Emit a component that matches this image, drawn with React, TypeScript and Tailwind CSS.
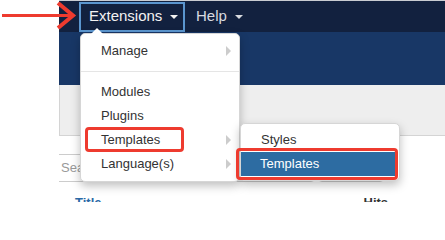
import React from "react";

const font = { fontFamily: '"Liberation Sans", Arial, sans-serif' };

function Chevron() {
  return (
    <span className="absolute right-[8px] top-1/2 -translate-y-1/2 w-0 h-0 border-y-[5px] border-y-transparent border-l-[5px] border-l-[#cccccc]" />
  );
}

function MenuItem({ label, sub }: { label: string; sub?: boolean }) {
  return (
    <div className="relative h-[24px] pl-[20px] leading-[24px] text-[13px] text-[#333333]">
      {label}
      {sub && <Chevron />}
    </div>
  );
}

export default function App() {
  return (
    <div
      className="relative w-[445px] h-[202px] overflow-hidden bg-white flex"
      style={font}
    >
      <div className="w-[59px] shrink-0" />

      {/* page behind the menus */}
      <div className="flex-1 flex flex-col">
        <div className="shrink-0 h-[32px] bg-[#12213f] border-t border-[#c9ccd2] flex items-center">
          <div className="ml-[20px] h-[30px] w-[106px] border-2 border-[#5b96cf] flex items-center pl-[8px] text-[15px] text-[#f2f2f2]">
            Extensions
            <span className="ml-[8px] w-0 h-0 border-x-[4px] border-x-transparent border-t-[4px] border-t-[#f2f2f2]" />
          </div>
          <div className="ml-[11px] flex items-center text-[15px] text-[#d8dbe0]">
            Help
            <span className="ml-[8px] w-0 h-0 border-x-[4px] border-x-transparent border-t-[4px] border-t-[#d8dbe0]" />
          </div>
        </div>
        <div className="shrink-0 h-[53px] bg-[#183766]" />
        <div className="shrink-0 h-[51px] bg-[#eeeeee] border-l border-b border-[#d4d4d4]" />
        <div className="shrink-0 mt-[18px] flex h-[28px]">
          <div className="w-[148px] border-y border-[#cccccc] flex items-center pl-[2px] text-[13px] text-[#999999]">
            Search
          </div>
          <div className="ml-[1px] w-[107px] border border-[#cccccc] rounded-[4px]" />
          <div className="ml-[3px] w-[66px] border border-[#cccccc] rounded-[4px]" />
        </div>
        <div className="shrink-0 mt-[13px] flex text-[13px] font-bold leading-[16px]">
          <span className="ml-[16px] text-[#2a69a6]">Title</span>
          <span className="ml-[262px] text-[#333333]">Hits</span>
        </div>
      </div>

      {/* red arrow */}
      <svg
        className="absolute left-0 top-0"
        width="80"
        height="32"
        viewBox="0 0 80 32"
      >
        <line x1="2" y1="15.5" x2="72" y2="15.5" stroke="#ee3b2f" strokeWidth="3" />
        <polyline
          points="58,3 73,15.5 58,28"
          fill="none"
          stroke="#ee3b2f"
          strokeWidth="4"
          strokeLinejoin="miter"
        />
      </svg>

      {/* main dropdown */}
      <div className="absolute left-[80px] top-[33px] w-[160px] bg-white rounded-[5px] border border-[#d6d6d6] py-[5px] shadow-[0_4px_10px_rgba(0,0,0,0.25)]">
        <span className="absolute left-[10px] -top-[6px] w-0 h-0 border-x-[6px] border-x-transparent border-b-[6px] border-b-white" />
        <MenuItem label="Manage" sub />
        <div className="my-[8px] h-px bg-[#e5e5e5]" />
        <MenuItem label="Modules" />
        <MenuItem label="Plugins" />
        <div className="relative">
          <MenuItem label="Templates" sub />
          <div className="absolute left-[4px] top-[-1px] w-[99px] h-[25px] border-[3px] border-[#ee3b2f] rounded-[4px]" />
        </div>
        <MenuItem label="Language(s)" sub />
      </div>

      {/* submenu */}
      <div className="absolute left-[240px] top-[123px] w-[160px] bg-white rounded-[5px] border border-[#d6d6d6] py-[4px] shadow-[0_4px_10px_rgba(0,0,0,0.25)]">
        <MenuItem label="Styles" />
        <div className="relative h-[24px] mr-[3px] pl-[19px] leading-[24px] text-[13px] text-white bg-[#2d6ca2]">
          Templates
          <div className="absolute left-[-5px] top-[-4px] w-[162px] h-[32px] border-[3px] border-[#ee3b2f] rounded-[4px]" />
        </div>
      </div>
    </div>
  );
}
